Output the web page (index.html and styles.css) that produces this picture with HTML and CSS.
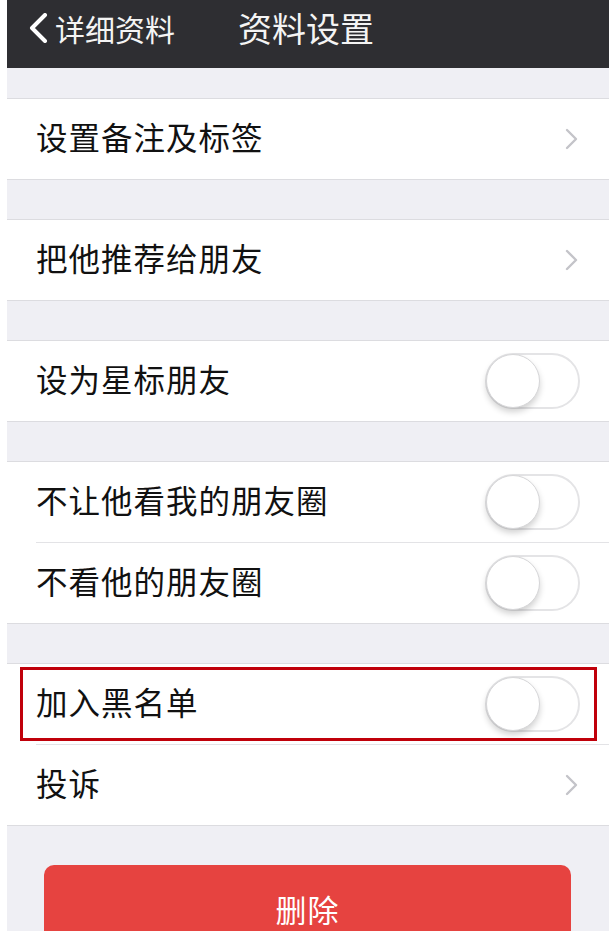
FILE: index.html
```html
<!DOCTYPE html>
<html lang="zh-CN">
<head>
<meta charset="utf-8">
<link rel="stylesheet" href="styles.css">
</head>
<body>
<div class="screen">
  <header class="navbar">
    <div class="nav-back">
      <svg class="back-icon" width="22" height="30" viewBox="0 0 22 30"><polyline points="18,2 5,15 18,28" fill="none" stroke="#ffffff" stroke-width="4" stroke-linecap="round" stroke-linejoin="round"/></svg>
      <span>详细资料</span>
    </div>
    <div class="nav-title">资料设置</div>
    <div></div>
  </header>

  <section class="group first">
    <div class="row"><span class="label">设置备注及标签</span><svg class="chev" width="15" height="24" viewBox="0 0 15 24"><polyline points="3,3 12,12 3,21" fill="none" stroke="#c4c4c9" stroke-width="2.4" stroke-linecap="round" stroke-linejoin="round"/></svg></div>
  </section>

  <section class="group">
    <div class="row"><span class="label">把他推荐给朋友</span><svg class="chev" width="15" height="24" viewBox="0 0 15 24"><polyline points="3,3 12,12 3,21" fill="none" stroke="#c4c4c9" stroke-width="2.4" stroke-linecap="round" stroke-linejoin="round"/></svg></div>
  </section>

  <section class="group">
    <div class="row"><span class="label">设为星标朋友</span><span class="switch"><span class="knob"></span></span></div>
  </section>

  <section class="group">
    <div class="row"><span class="label">不让他看我的朋友圈</span><span class="switch"><span class="knob"></span></span></div>
    <div class="row sep"><span class="label">不看他的朋友圈</span><span class="switch"><span class="knob"></span></span></div>
  </section>

  <section class="group">
    <div class="row highlighted"><span class="label">加入黑名单</span><span class="switch"><span class="knob"></span></span></div>
    <div class="row sep"><span class="label">投诉</span><svg class="chev" width="15" height="24" viewBox="0 0 15 24"><polyline points="3,3 12,12 3,21" fill="none" stroke="#c4c4c9" stroke-width="2.4" stroke-linecap="round" stroke-linejoin="round"/></svg></div>
  </section>

  <div class="btn-wrap">
    <button class="btn-delete">删除</button>
  </div>
</div>
</body>
</html>
```

FILE: styles.css
```css
* { box-sizing: border-box; }
html, body { margin: 0; padding: 0; background: #ffffff; }
body {
  font-family: "Noto Sans CJK SC", "Noto Sans", sans-serif;
  height: 931px;
  overflow: hidden;
}
.screen {
  margin-left: 7px;
  width: 602px;
  height: 931px;
  background: #efeff4;
  position: relative;
}
.navbar {
  height: 68px;
  background: #2e2e32;
  display: grid;
  grid-template-columns: 1fr auto 1fr;
  align-items: start;
  padding-top: 4px;
  color: #f4f4f4;
}
.nav-back {
  display: flex;
  align-items: center;
  padding-left: 20px;
  gap: 6px;
  font-size: 30px;
  line-height: 48px;
}
.back-icon { display: block; }
.nav-title {
  font-size: 34px;
  line-height: 48px;
  margin-left: -4px;
}
.group {
  background: #ffffff;
  border-top: 1px solid #dcdce0;
  border-bottom: 1px solid #dcdce0;
  margin-top: 39px;
}
.group.first { margin-top: 30px; }
.row {
  height: 80px;
  display: flex;
  align-items: center;
  justify-content: space-between;
  padding: 0 29px 0 29px;
  position: relative;
}
.row.sep::before {
  content: "";
  position: absolute;
  left: 29px;
  right: 0;
  top: -1px;
  height: 1px;
  background: #e3e3e6;
}
.row.sep { margin-top: 1px; }
.label {
  font-size: 31.5px;
  line-height: 40px;
  padding-bottom: 6px;
  color: #111111;
  letter-spacing: 1px;
}
.chev {
  display: block;
  margin-right: 1px;
}
.switch {
  width: 95px;
  height: 56px;
  border-radius: 28px;
  border: 2px solid #e4e4e6;
  background: #ffffff;
  position: relative;
}
.knob {
  position: absolute;
  left: -1px;
  top: -1px;
  width: 54px;
  height: 54px;
  border-radius: 50%;
  background: #ffffff;
  border: 1px solid #d6d6d8;
  box-shadow: 0 4px 6px rgba(0,0,0,0.18);
}
.highlighted::after {
  content: "";
  position: absolute;
  left: 13px;
  right: 12px;
  top: 3px;
  bottom: 3px;
  border: 3px solid #c0000a;
}
.btn-wrap {
  padding: 39px 38px 0 37px;
}
.btn-delete {
  width: 100%;
  height: 90px;
  border: none;
  border-radius: 10px;
  background: #e64340;
  color: #ffffff;
  font-family: "Noto Sans CJK SC", sans-serif;
  font-size: 31px;
  letter-spacing: 1px;
  padding-bottom: 4px;
  display: block;
}
```
